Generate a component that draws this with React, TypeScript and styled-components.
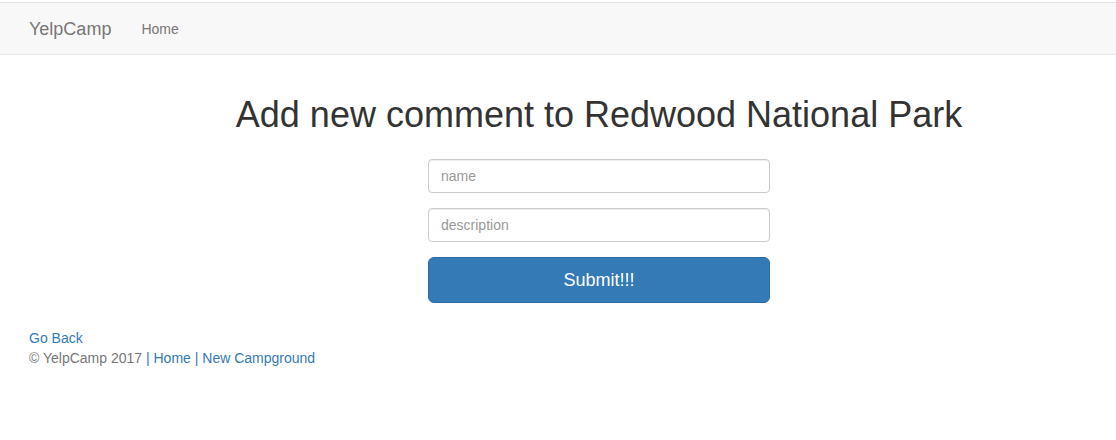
import React from "react";
import styled, { createGlobalStyle } from "styled-components";

const Global = createGlobalStyle`
  html, body {
    margin: 0;
    padding: 0;
    overflow-x: hidden;
    background: #fff;
  }
  body {
    font-family: "Liberation Sans", Arial, Helvetica, sans-serif;
    font-size: 14px;
    line-height: 1.42857143;
    color: #333;
    padding-top: 2px;
  }
  * { box-sizing: border-box; }
`;

const Page = styled.div`
  width: 100%;
  overflow: hidden;
`;

const Navbar = styled.nav`
  min-height: 53px;
  background: #f8f8f8;
  border-top: 1px solid #e1e1e1;
  border-bottom: 1px solid #e7e7e7;
  margin-bottom: 20px;
`;

const Container = styled.div`
  width: 1170px;
  margin-left: 14px;
  padding: 0 15px;
  display: flow-root;
`;

const NavInner = styled.div`
  width: 1170px;
  margin-left: 14px;
  padding: 0 15px;
  display: flex;
  align-items: center;
  height: 51px;
`;

const Brand = styled.a`
  font-size: 18px;
  line-height: 20px;
  color: #777;
  text-decoration: none;
  padding: 15px;
  margin-left: -15px;
`;

const NavLink = styled.a`
  font-size: 14px;
  line-height: 20px;
  color: #777;
  text-decoration: none;
  padding: 15px;
`;

const Title = styled.h1`
  font-size: 36px;
  font-weight: 500;
  line-height: 1.1;
  margin: 20px 0 10px;
  text-align: center;
  color: #333;
`;

const Form = styled.form`
  width: 30%;
  margin: 24px auto 25px;
  display: flex;
  flex-direction: column;
`;

const FormGroup = styled.div`
  margin-bottom: 15px;
`;

const Input = styled.input`
  display: block;
  width: 100%;
  height: 34px;
  padding: 6px 12px;
  font-family: inherit;
  font-size: 14px;
  line-height: 1.42857143;
  color: #555;
  background: #fff;
  border: 1px solid #ccc;
  border-radius: 4px;
  box-shadow: inset 0 1px 1px rgba(0, 0, 0, 0.075);
  outline: none;
  &::placeholder { color: #999; }
`;

const Button = styled.button`
  display: block;
  width: 100%;
  padding: 10px 16px;
  font-family: inherit;
  font-size: 18px;
  line-height: 1.3333333;
  color: #fff;
  background: #337ab7;
  border: 1px solid #2e6da4;
  border-radius: 6px;
  cursor: pointer;
`;

const Link = styled.a`
  color: #337ab7;
  text-decoration: none;
`;

const Line = styled.div``;

const Muted = styled.span`
  color: #777;
`;

export default function App() {
  return (
    <Page>
      <Global />
      <Navbar>
        <NavInner>
          <Brand href="#">YelpCamp</Brand>
          <NavLink href="#">Home</NavLink>
        </NavInner>
      </Navbar>
      <Container>
        <Title>Add new comment to Redwood National Park</Title>
        <Form onSubmit={(e) => e.preventDefault()}>
          <FormGroup>
            <Input type="text" placeholder="name" />
          </FormGroup>
          <FormGroup>
            <Input type="text" placeholder="description" />
          </FormGroup>
          <Button type="submit">Submit!!!</Button>
        </Form>
        <Line>
          <Link href="#">Go Back</Link>
        </Line>
        <Line>
          <Muted>© YelpCamp 2017 </Muted>
          <Link href="#">| Home |</Link> <Link href="#">New Campground</Link>
        </Line>
      </Container>
    </Page>
  );
}
